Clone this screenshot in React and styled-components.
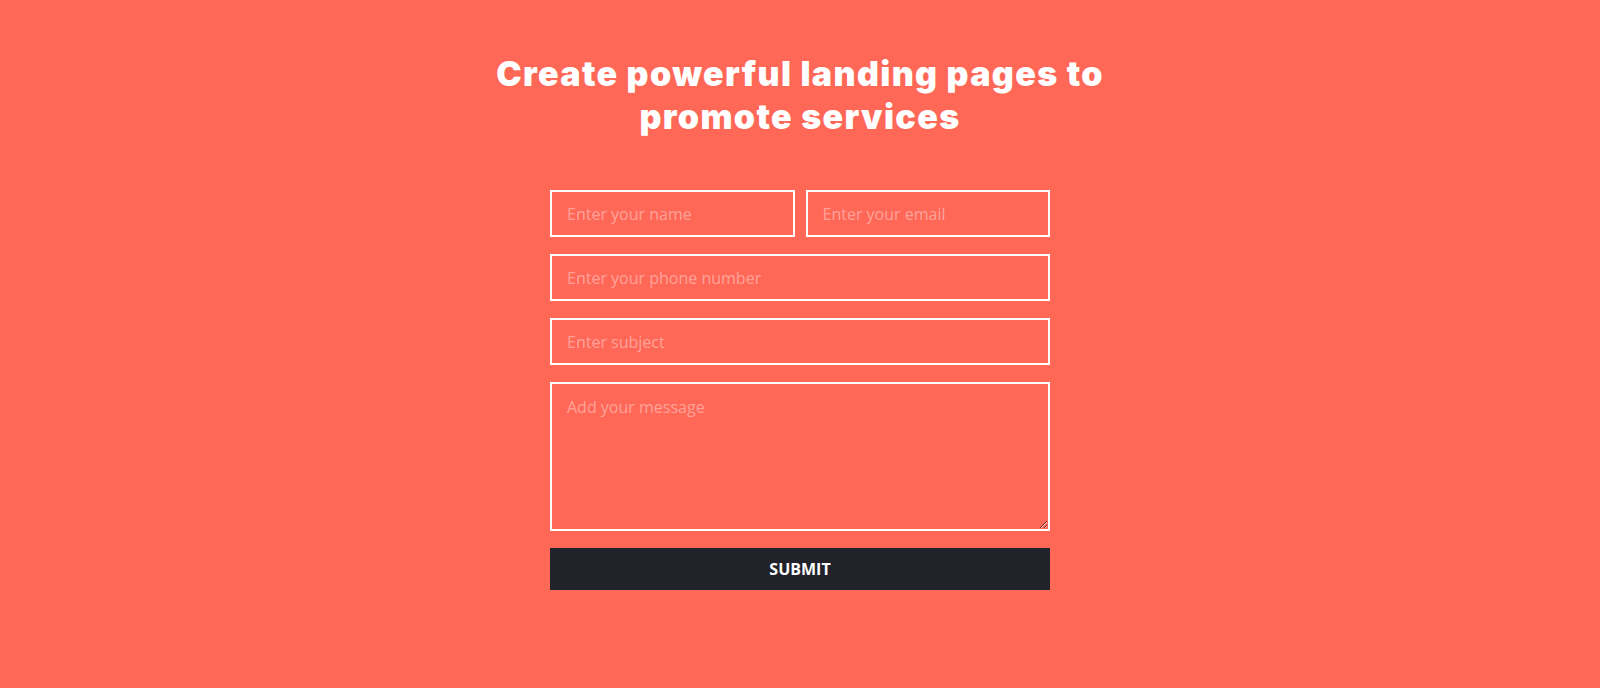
import React from "react";
import styled, { createGlobalStyle } from "styled-components";

const Global = createGlobalStyle`
  html, body { margin: 0; padding: 0; background: #ff6757; }
  body { font-family: "Open Sans", sans-serif; }
  * { box-sizing: border-box; }
`;

const Page = styled.section`
  min-height: 688px;
  background: #ff6757;
  display: flex;
  flex-direction: column;
  align-items: center;
  padding-top: 52px;
`;

const Title = styled.h1`
  margin: 0;
  color: #fff;
  font-family: Inter, sans-serif;
  font-weight: 900;
  font-size: 34px;
  line-height: 43px;
  letter-spacing: 1.35px;
  text-align: center;
  max-width: 680px;
`;

const Form = styled.form`
  margin-top: 52px;
  width: 500px;
  display: flex;
  flex-direction: column;
  gap: 17px;
`;

const Row = styled.div`
  display: flex;
  gap: 11px;
`;

const fieldCss = `
  width: 100%;
  border: 2px solid #fff;
  background: transparent;
  color: #fff;
  font-family: "Open Sans", sans-serif;
  font-size: 16px;
  padding: 0 15px;
  outline: none;
  border-radius: 0;
  &::placeholder { color: rgba(255,255,255,0.4); }
`;

const Input = styled.input`
  ${fieldCss}
  height: 47px;
  flex: ${(p) => (p.$half ? "1 1 0" : "0 0 47px")};
  min-width: 0;
`;

const TextArea = styled.textarea`
  ${fieldCss}
  height: 149px;
  flex: 0 0 149px;
  padding-top: 12px;
  display: block;
`;

const Submit = styled.button`
  height: 42px;
  flex: 0 0 42px;
  width: 100%;
  border: none;
  background: #21222a;
  color: #fff;
  font-family: "Open Sans", sans-serif;
  font-weight: 700;
  font-size: 16px;
  text-transform: uppercase;
  cursor: pointer;
`;

export default function App() {
  return (
    <>
      <Global />
      <Page>
        <Title>
          Create powerful landing pages to
          <br />
          promote services
        </Title>
        <Form onSubmit={(e) => e.preventDefault()}>
          <Row>
            <Input $half placeholder="Enter your name" />
            <Input $half placeholder="Enter your email" />
          </Row>
          <Input placeholder="Enter your phone number" />
          <Input placeholder="Enter subject" />
          <TextArea placeholder="Add your message" />
          <Submit type="submit">Submit</Submit>
        </Form>
      </Page>
    </>
  );
}
